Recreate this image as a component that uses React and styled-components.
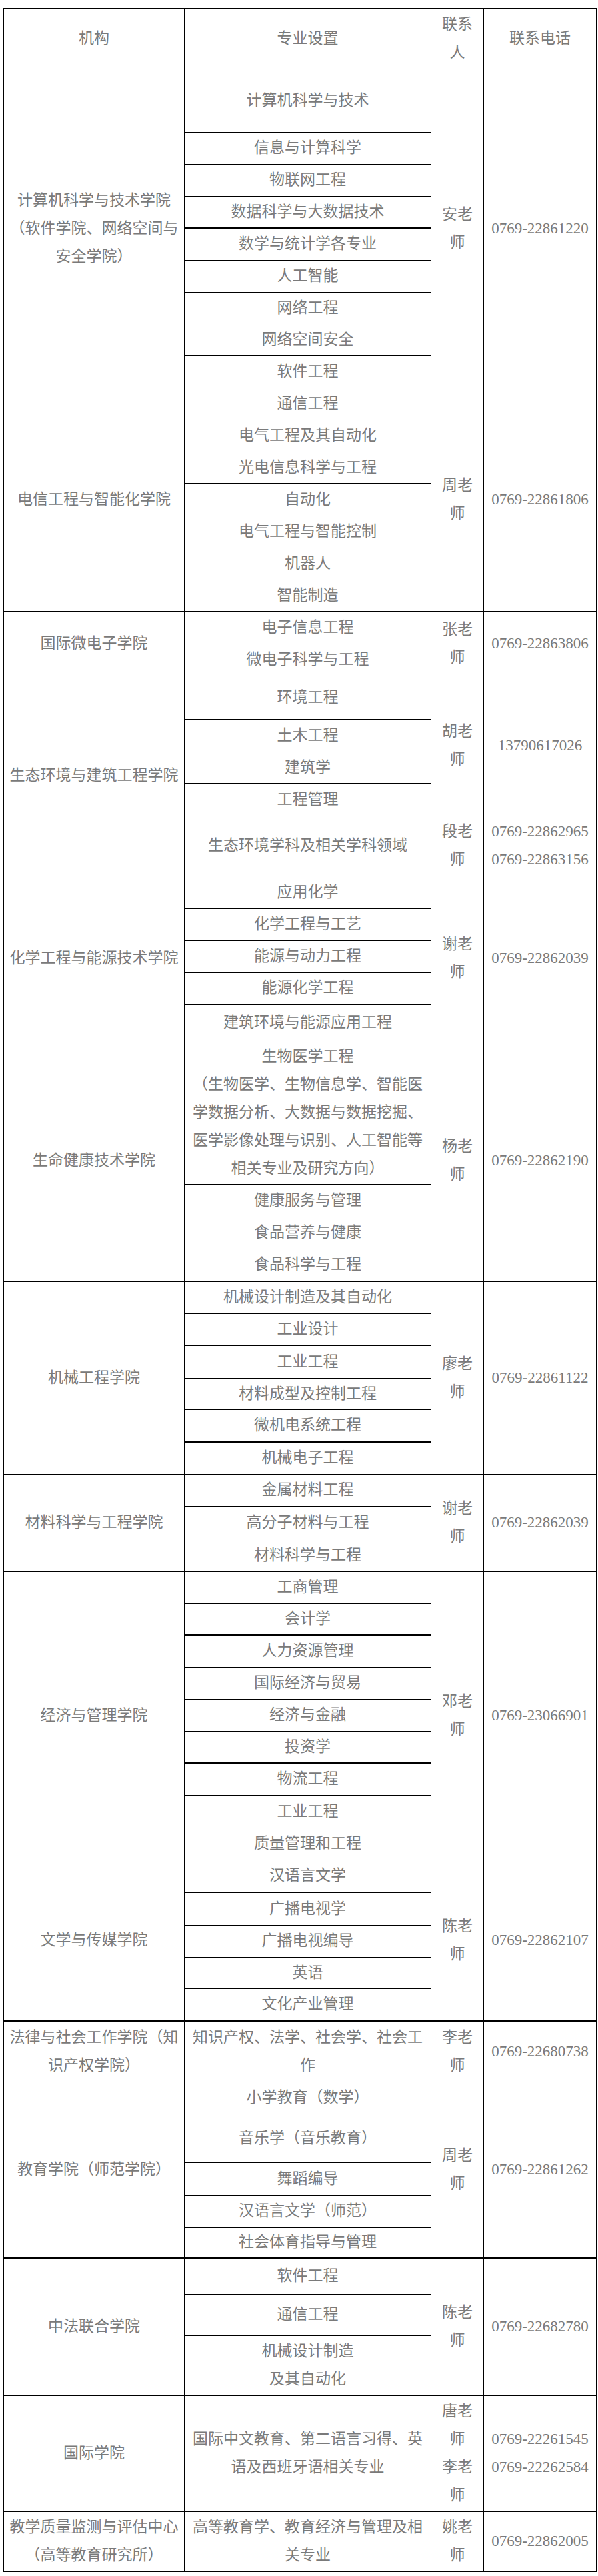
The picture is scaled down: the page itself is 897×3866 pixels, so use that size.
import React from 'react';
import styled, { createGlobalStyle } from 'styled-components';

/*----- DATA -----*/
const groups = [
  {
    name: ['计算机科学与技术学院', '（软件学院、网络空间与', '安全学院）'],
    contacts: [{ who: ['安老', '师'], tel: ['0769-22861220'] }],
    majors: [
      { t: ['计算机科学与技术'], h: 95 },
      { t: ['信息与计算科学'] },
      { t: ['物联网工程'] },
      { t: ['数据科学与大数据技术'], thick: true },
      { t: ['数学与统计学各专业'] },
      { t: ['人工智能'] },
      { t: ['网络工程'] },
      { t: ['网络空间安全'], thick: true },
      { t: ['软件工程'] },
    ],
  },
  {
    name: ['电信工程与智能化学院'],
    contacts: [{ who: ['周老', '师'], tel: ['0769-22861806'] }],
    thick: true,
    majors: [
      { t: ['通信工程'] },
      { t: ['电气工程及其自动化'] },
      { t: ['光电信息科学与工程'], thick: true },
      { t: ['自动化'] },
      { t: ['电气工程与智能控制'] },
      { t: ['机器人'] },
      { t: ['智能制造'] },
    ],
  },
  {
    name: ['国际微电子学院'],
    contacts: [{ who: ['张老', '师'], tel: ['0769-22863806'] }],
    majors: [{ t: ['电子信息工程'] }, { t: ['微电子科学与工程'] }],
  },
  {
    name: ['生态环境与建筑工程学院'],
    contacts: [
      { who: ['胡老', '师'], tel: ['13790617026'], span: 4 },
      { who: ['段老', '师'], tel: ['0769-22862965', '0769-22863156'], span: 1 },
    ],
    majors: [
      { t: ['环境工程'], h: 65 },
      { t: ['土木工程'], h: 49 },
      { t: ['建筑学'], thick: true },
      { t: ['工程管理'] },
      { t: ['生态环境学科及相关学科领域'], h: 90 },
    ],
  },
  {
    name: ['化学工程与能源技术学院'],
    contacts: [{ who: ['谢老', '师'], tel: ['0769-22862039'] }],
    majors: [
      { t: ['应用化学'], h: 49 },
      { t: ['化学工程与工艺'], thick: true },
      { t: ['能源与动力工程'] },
      { t: ['能源化学工程'], h: 49, thick: true },
      { t: ['建筑环境与能源应用工程'], h: 54 },
    ],
  },
  {
    name: ['生命健康技术学院'],
    contacts: [{ who: ['杨老', '师'], tel: ['0769-22862190'] }],
    thick: true,
    majors: [
      {
        t: [
          '生物医学工程',
          '（生物医学、生物信息学、智能医',
          '学数据分析、大数据与数据挖掘、',
          '医学影像处理与识别、人工智能等',
          '相关专业及研究方向）',
        ],
        h: 216,
        thick: true,
      },
      { t: ['健康服务与管理'] },
      { t: ['食品营养与健康'] },
      { t: ['食品科学与工程'], h: 49 },
    ],
  },
  {
    name: ['机械工程学院'],
    contacts: [{ who: ['廖老', '师'], tel: ['0769-22861122'] }],
    majors: [
      { t: ['机械设计制造及其自动化'], thick: true },
      { t: ['工业设计'] },
      { t: ['工业工程'], h: 49 },
      { t: ['材料成型及控制工程'], h: 47 },
      { t: ['微机电系统工程'], h: 49, thick: true },
      { t: ['机械电子工程'] },
    ],
  },
  {
    name: ['材料科学与工程学院'],
    contacts: [{ who: ['谢老', '师'], tel: ['0769-22862039'] }],
    majors: [
      { t: ['金属材料工程'], h: 49, thick: true },
      { t: ['高分子材料与工程'] },
      { t: ['材料科学与工程'], h: 49 },
    ],
  },
  {
    name: ['经济与管理学院'],
    contacts: [{ who: ['邓老', '师'], tel: ['0769-23066901'] }],
    majors: [
      { t: ['工商管理'] },
      { t: ['会计学'], thick: true },
      { t: ['人力资源管理'] },
      { t: ['国际经济与贸易'] },
      { t: ['经济与金融'] },
      { t: ['投资学'], thick: true },
      { t: ['物流工程'] },
      { t: ['工业工程'], h: 49 },
      { t: ['质量管理和工程'] },
    ],
  },
  {
    name: ['文学与传媒学院'],
    contacts: [{ who: ['陈老', '师'], tel: ['0769-22862107'] }],
    thick: true,
    majors: [
      { t: ['汉语言文学'], h: 49, thick: true },
      { t: ['广播电视学'], h: 49 },
      { t: ['广播电视编导'] },
      { t: ['英语'], h: 47 },
      { t: ['文化产业管理'], h: 49 },
    ],
  },
  {
    name: ['法律与社会工作学院（知', '识产权学院）'],
    contacts: [{ who: ['李老', '师'], tel: ['0769-22680738'] }],
    majors: [{ t: ['知识产权、法学、社会学、社会工', '作'], h: 91 }],
  },
  {
    name: ['教育学院（师范学院）'],
    contacts: [{ who: ['周老', '师'], tel: ['0769-22861262'] }],
    thick: true,
    majors: [
      { t: ['小学教育（数学）'] },
      { t: ['音乐学（音乐教育）'], h: 73 },
      { t: ['舞蹈编导'], h: 49 },
      { t: ['汉语言文学（师范）'] },
      { t: ['社会体育指导与管理'], h: 47 },
    ],
  },
  {
    name: ['中法联合学院'],
    contacts: [{ who: ['陈老', '师'], tel: ['0769-22682780'] }],
    majors: [
      { t: ['软件工程'], h: 54 },
      { t: ['通信工程'], h: 62, thick: true },
      { t: ['机械设计制造', '及其自动化'], h: 90 },
    ],
  },
  {
    name: ['国际学院'],
    contacts: [{ who: ['唐老', '师', '李老', '师'], tel: ['0769-22261545', '0769-22262584'] }],
    majors: [{ t: ['国际中文教育、第二语言习得、英', '语及西班牙语相关专业'], h: 174 }],
  },
  {
    name: ['教学质量监测与评估中心', '（高等教育研究所）'],
    contacts: [{ who: ['姚老', '师'], tel: ['0769-22862005'] }],
    majors: [{ t: ['高等教育学、教育经济与管理及相', '关专业'], h: 90 }],
  },
];

const Lines = ({ items }) =>
  items.map((s, i) => (
    <React.Fragment key={i}>
      {i > 0 && <br />}
      {s}
    </React.Fragment>
  ));

/*----- COMPONENTS -----*/
function Group({ group }) {
  const { name, contacts, majors, thick } = group;
  const last = majors.length - 1;
  // which contact starts on which row
  const starts = {};
  let at = 0;
  contacts.forEach((c) => {
    const span = c.span || majors.length;
    starts[at] = { ...c, span, endsGroup: at + span - 1 === last };
    at += span;
  });

  return majors.map((m, i) => {
    const c = starts[i];
    return (
      <Row key={i} $h={m.h}>
        {i === 0 && (
          <NameCell rowSpan={majors.length} $thick={thick}>
            <Lines items={name} />
          </NameCell>
        )}
        <MajorCell $thick={m.thick || (i === last && thick)}>
          <Lines items={m.t} />
        </MajorCell>
        {c && (
          <ContactCell rowSpan={c.span} $thick={c.endsGroup && thick}>
            <Lines items={c.who} />
          </ContactCell>
        )}
        {c && (
          <PhoneCell rowSpan={c.span} $thick={c.endsGroup && thick}>
            <Lines items={c.tel} />
          </PhoneCell>
        )}
      </Row>
    );
  });
}

export default function App() {
  return (
    <Page>
      <GlobalStyle />
      <Table>
        <colgroup>
          <Col $w={271} />
          <Col $w={370} />
          <Col $w={79} />
          <Col $w={169} />
        </colgroup>
        <thead>
          <Row $h={90}>
            <HeadCell>机构</HeadCell>
            <HeadCell>专业设置</HeadCell>
            <HeadCell>
              联系
              <br />人
            </HeadCell>
            <HeadCell>联系电话</HeadCell>
          </Row>
        </thead>
        <tbody>
          {groups.map((g, i) => (
            <Group key={i} group={g} />
          ))}
        </tbody>
      </Table>
    </Page>
  );
}

/*----- STYLES -----*/
const GlobalStyle = createGlobalStyle`
  html, body {
    margin: 0;
    padding: 0;
    background: #fff;
  }
  body {
    font-family: "Liberation Serif", "Noto Sans CJK SC", serif;
  }
`;

const Page = styled.div`
  padding: 12px 2px 2px 5px;
`;

const Table = styled.table`
  width: 889px;
  table-layout: fixed;
  border-collapse: collapse;
  border-top: 2px solid #000;
  border-bottom: 2px solid #000;
  font-family: "Liberation Serif", "Noto Sans CJK SC", serif;
  font-size: 23px;
  line-height: 42px;
  color: #7a7a7a;
`;

const Col = styled.col`
  width: ${(p) => p.$w}px;
`;

const Row = styled.tr`
  height: ${(p) => p.$h || 48}px;
`;

const HeadCell = styled.th`
  border: 1px solid #000;
  border-top-width: 2px;
  padding: 0 6px;
  font-weight: 400;
  text-align: center;
  vertical-align: middle;
`;

const Cell = styled.td`
  border: 1px solid #000;
  border-bottom-width: ${(p) => (p.$thick ? 2 : 1)}px;
  padding: 0 6px;
  text-align: center;
  vertical-align: middle;
`;

const NameCell = styled(Cell)`
  padding: 0 5px;
`;

const MajorCell = styled(Cell)`
  padding: 0 8px;
`;

const ContactCell = styled(Cell)`
  padding: 0 4px;
`;

const PhoneCell = styled(Cell)`
  padding: 0 4px;
`;
